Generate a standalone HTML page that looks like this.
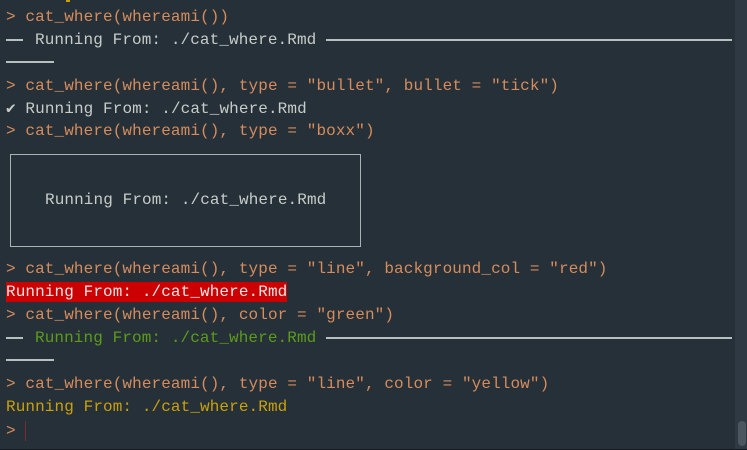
<!DOCTYPE html>
<html><head><style>
html,body{margin:0;padding:0}
body{width:747px;height:450px;background:#263038;position:relative;overflow:hidden;font-family:"Liberation Mono","DejaVu Sans Mono",monospace;font-size:16px;letter-spacing:0.1px}
.l{position:absolute;left:6px;height:23px;line-height:23px;white-space:pre;margin-top:1px}
.o{color:#d68c5c}.g{color:#c7ccc9}.gr{color:#5b9c1a}.y{color:#c9a10a}
.r{position:absolute;height:1.5px;background:#b8bfbf}
.sb{position:absolute;left:735px;top:0;width:12px;height:449px;background:#2f3943}
.th{position:absolute;left:738px;top:421px;width:8px;height:25px;border-radius:4px;background:#4c5660}
</style></head><body>
<div style="position:absolute;left:66px;top:0;width:4px;height:2px;background:#c9a10a"></div>
<div class="l o" style="top:5px">&gt; cat_where(whereami())</div>
<div class="r" style="left:6px;top:39px;width:17px"></div>
<div class="l g" style="top:28px;left:35px">Running From: ./cat_where.Rmd</div>
<div class="r" style="left:326px;top:39px;width:406px"></div>
<div class="r" style="left:6px;top:61px;width:48px"></div>
<div class="l o" style="top:74px">&gt; cat_where(whereami(), type = "bullet", bullet = "tick")</div>
<div class="l g" style="top:97px">✔ Running From: ./cat_where.Rmd</div>
<div class="l o" style="top:119px">&gt; cat_where(whereami(), type = "boxx")</div>
<div style="position:absolute;left:10px;top:154px;width:349px;height:91px;border:1px solid #aab2b2"></div>
<div class="l g" style="top:188px;left:45px">Running From: ./cat_where.Rmd</div>
<div class="l o" style="top:257px">&gt; cat_where(whereami(), type = "line", background_col = "red")</div>
<div style="position:absolute;left:6px;top:282px;width:281px;height:20px;background:#cc0000"></div>
<div class="l" style="top:280px;color:#ece6e6">Running From: ./cat_where.Rmd</div>
<div class="l o" style="top:303px">&gt; cat_where(whereami(), color = "green")</div>
<div class="r" style="left:6px;top:337px;width:17px"></div>
<div class="l gr" style="top:326px;left:35px">Running From: ./cat_where.Rmd</div>
<div class="r" style="left:326px;top:337px;width:406px"></div>
<div class="r" style="left:6px;top:359px;width:48px"></div>
<div class="l o" style="top:372px">&gt; cat_where(whereami(), type = "line", color = "yellow")</div>
<div class="l y" style="top:395px">Running From: ./cat_where.Rmd</div>
<div class="l o" style="top:419px">&gt;</div>
<div style="position:absolute;left:25px;top:421px;width:1px;height:20px;background:#7a2a2a"></div>
<div class="sb"></div><div class="th"></div>
<div style="position:absolute;left:0;top:449px;width:747px;height:1px;background:#141a20"></div>
</body></html>
